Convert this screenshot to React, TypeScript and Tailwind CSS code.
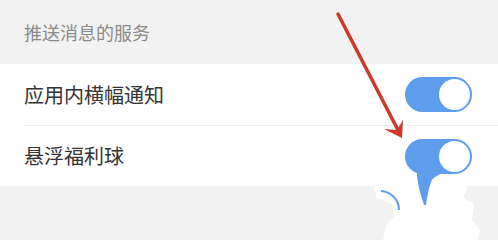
const font = { fontFamily: '"Noto Sans CJK SC", "Noto Sans", sans-serif' };

function Toggle() {
  return (
    <div className="flex h-[35px] w-[67px] items-center justify-end rounded-full bg-[#5e9cec] p-[2px]">
      <div className="h-[31px] w-[31px] rounded-full bg-white" />
    </div>
  );
}

function Row({ label, divider }: { label: string; divider?: boolean }) {
  return (
    <div className="pl-[24px]">
      <div
        className={
          'flex h-[61px] items-center justify-between pr-[26px] ' +
          (divider ? 'border-t border-[#ececec]' : '')
        }
      >
        <span className="-ml-[0px] text-[20px] leading-none text-[#333333]">{label}</span>
        <Toggle />
      </div>
    </div>
  );
}

export default function App() {
  return (
    <div className="relative h-[240px] w-[498px] overflow-hidden bg-[#f2f2f2]" style={font}>
      <div className="flex h-[64px] items-center px-[24px]">
        <span className="text-[18px] leading-none text-[#8a8a8a]">推送消息的服务</span>
      </div>
      <div className="bg-white">
        <Row label="应用内横幅通知" />
        <Row label="悬浮福利球" divider />
      </div>

      <svg className="pointer-events-none absolute left-0 top-0" width="498" height="240" viewBox="0 0 498 240">
        {/* erased patch below the second switch */}
        <path
          d="M373,186 L468,186 L463,198 L474,204 L472,220 L480,230 L478,240 L383,240 L386,226 L394,216 L392,204 L377,198 Z"
          fill="#ffffff"
        />
        <path d="M381,191 A19,19 0 0 1 399,210" stroke="#5e9cec" strokeWidth="2" fill="none" />
        <path
          d="M417,172 L441,172 C440,176 433,176 431,182 C428,190 427,198 426,205 L424,205 C421,196 418,186 417,176 Z"
          fill="#5e9cec"
        />
        {/* red arrow */}
        <line x1="338" y1="14" x2="399" y2="132" stroke="#c9392c" strokeWidth="3.5" strokeLinecap="round" />
        <polygon points="402,138 384,129 397,130 403,120" fill="#c9392c" />
      </svg>
    </div>
  );
}
